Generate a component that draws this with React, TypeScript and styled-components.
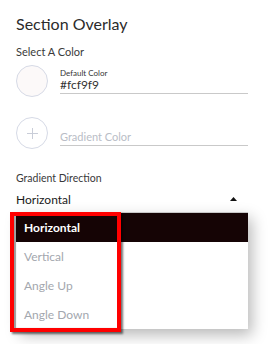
import React from "react";
import styled, { createGlobalStyle } from "styled-components";

const Global = createGlobalStyle`
  html, body { margin: 0; padding: 0; background: #fff; }
  body { font-family: Lato, "Open Sans", sans-serif; }
`;

const Page = styled.div`
  width: 269px;
  height: 344px;
  box-sizing: border-box;
  padding: 14px 21px 0 16px;
  display: flex;
  flex-direction: column;
  overflow: hidden;
`;

const Title = styled.div`
  font-size: 16px;
  color: #2b2b2b;
  line-height: 20px;
`;

const Label = styled.div<{ $size: number; $mt: number }>`
  font-size: ${(p) => p.$size}px;
  color: #3a3a3a;
  line-height: 14px;
  margin-top: ${(p) => p.$mt}px;
`;

const ColorRow = styled.div<{ $mt: number }>`
  display: flex;
  align-items: center;
  gap: 12px;
  margin-top: ${(p) => p.$mt}px;
`;

const Swatch = styled.div<{ $bg: string }>`
  width: 30px;
  height: 30px;
  border-radius: 50%;
  border: 1px solid #d6dae6;
  background: ${(p) => p.$bg};
  display: flex;
  align-items: center;
  justify-content: center;
  flex-shrink: 0;
`;

const Field = styled.div`
  flex: 1;
  border-bottom: 1px solid #c9c9c9;
  display: flex;
  flex-direction: column;
  justify-content: flex-end;
  height: 24px;
  padding-bottom: 1px;
`;

const FieldLabel = styled.div`
  font-size: 8px;
  line-height: 10px;
  color: #333;
`;

const FieldValue = styled.div<{ $placeholder?: boolean }>`
  font-size: ${(p) => (p.$placeholder ? 11 : 12)}px;
  line-height: 14px;
  color: ${(p) => (p.$placeholder ? "#b9bdc6" : "#333")};
`;

const SelectWrap = styled.div`
  position: relative;
  margin-top: 6px;
`;

const SelectValue = styled.div`
  display: flex;
  align-items: center;
  justify-content: space-between;
  font-size: 12px;
  font-weight: 400;
  color: #1a1a1a;
  height: 16px;
  padding-right: 11px;
`;

const Menu = styled.div`
  margin-top: 5px;
  border-top: 1px solid #c8c8c8;
  background: #fff;
  box-shadow: 4px 6px 14px rgba(0, 0, 0, 0.28);
  display: flex;
  flex-direction: column;
`;

const Item = styled.div<{ $active?: boolean }>`
  height: 29px;
  display: flex;
  align-items: center;
  padding-left: 8px;
  font-size: 12px;
  font-weight: ${(p) => (p.$active ? 700 : 400)};
  color: ${(p) => (p.$active ? "#fff" : "#a3a7ae")};
  background: ${(p) => (p.$active ? "#150405" : "#fff")};
`;

const Highlight = styled.div`
  position: absolute;
  left: -6px;
  top: 21px;
  width: 103px;
  height: 112px;
  border: 4px solid #ff0000;
  box-shadow: 2px 2px 2px rgba(0, 0, 0, 0.55), inset 2px 0 1px rgba(0,0,0,0.35);
  pointer-events: none;
`;

const options = ["Horizontal", "Vertical", "Angle Up", "Angle Down"];

export default function App() {
  return (
    <>
      <Global />
      <Page>
        <Title>Section Overlay</Title>
        <Label $size={11} $mt={11}>Select A Color</Label>
        <ColorRow $mt={6}>
          <Swatch $bg="#fcf9f9" />
          <Field>
            <FieldLabel>Default Color</FieldLabel>
            <FieldValue>#fcf9f9</FieldValue>
          </Field>
        </ColorRow>
        <ColorRow $mt={20}>
          <Swatch $bg="#fff">
            <svg width="11" height="11" viewBox="0 0 11 11">
              <path d="M5.5 0v11M0 5.5h11" stroke="#c9cdd8" strokeWidth="1" />
            </svg>
          </Swatch>
          <Field>
            <FieldValue $placeholder>Gradient Color</FieldValue>
          </Field>
        </ColorRow>
        <Label $size={10.5} $mt={22}>Gradient Direction</Label>
        <SelectWrap>
          <SelectValue>
            <span>Horizontal</span>
            <svg width="7" height="4" viewBox="0 0 7 4">
              <path d="M0 4L3.5 0L7 4Z" fill="#111" />
            </svg>
          </SelectValue>
          <Menu>
            {options.map((o, i) => (
              <Item key={o} $active={i === 0}>{o}</Item>
            ))}
          </Menu>
          <Highlight />
        </SelectWrap>
      </Page>
    </>
  );
}
